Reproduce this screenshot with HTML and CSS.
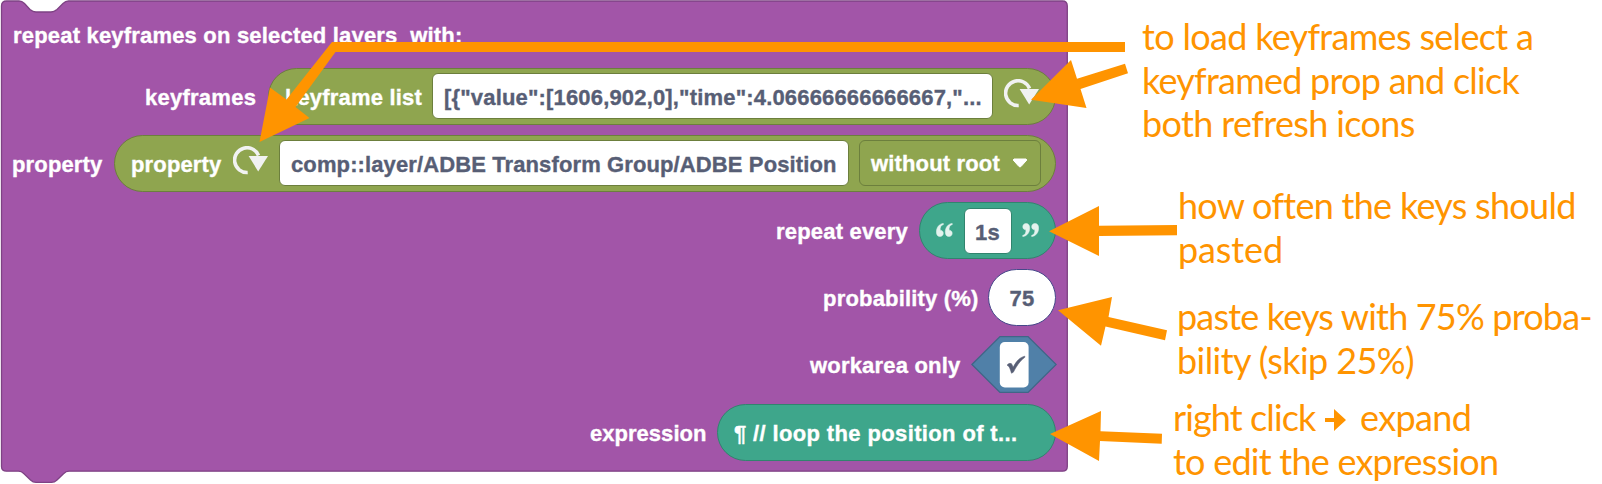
FILE: index.html
```html
<!DOCTYPE html>
<html lang="en">
<head>
<meta charset="utf-8">
<title>Repeat keyframes block</title>
<link rel="stylesheet" href="styles.css">
</head>
<body>
<svg class="defs" width="0" height="0">
  <symbol id="refresh" viewBox="0 0 36 30">
    <path d="M14.7 26.5 A12.4 12.4 0 1 1 25.5 9.5" fill="none" stroke="#f1f2f2" stroke-width="3.6"/>
    <path d="M15.6 10 H35 L25.2 25.4 Z" fill="#f1f2f2"/>
  </symbol>
</svg>
<main class="stage">
  <section class="block">
    <svg class="block-shape" width="1068" height="484" viewBox="0 0 1068 484">
      <path d="M1.5 6 Q1.5 1 6.500 1 H19 Q22 1 24.500 3.500 L30 9.500 Q33 12 36 12 H51 Q54 12 57 9.500 L63 3.500 Q65.500 1 68.500 1 H1062.500 Q1067.300 1 1067.300 6 V466.500 Q1067.300 471.200 1062.500 471.200 H69 Q66 471.200 63.500 473.700 L57 480 Q54.500 482.400 51.500 482.400 H36 Q33 482.400 30.500 480 L24 473.700 Q21.500 471.200 18.500 471.200 H6.500 Q1.500 471.200 1.500 466.500 Z"/>
    </svg>
    <h1 class="label title">repeat keyframes on selected layers&nbsp; with:</h1>
    <div class="rows">
      <div class="row">
        <span class="label w-keyframes">keyframes</span>
        <div class="pill green list-pill">
          <span class="label w-list">keyframe list</span>
          <span class="field list-field">[{"value":[1606,902,0],"time":4.06666666666667,"...</span>
          <svg class="refresh"><use href="#refresh"/></svg>
        </div>
      </div>
      <div class="row">
        <span class="label w-property">property</span>
        <div class="pill green property-pill">
          <span class="label w-property">property</span>
          <svg class="refresh"><use href="#refresh"/></svg>
          <span class="field path-field">comp::layer/ADBE Transform Group/ADBE Position</span>
          <span class="dropdown">without root
            <svg width="16" height="10" viewBox="0 0 16 10"><path d="M2 1 H14 L14.800 2 L9 8.500 Q8 9.300 7 8.500 L1.200 2 Z" fill="#fff" stroke="#fff" stroke-linejoin="round"/></svg>
          </span>
        </div>
      </div>
      <div class="row">
        <span class="label w-repeat">repeat every</span>
        <div class="pill teal quote-pill">
          <svg class="quote" width="17" height="14" viewBox="0 0 17 14"><path id="q" d="M7.300 .4 C3 1 .4 4.500 .4 9 C.4 12 1.800 13.500 4 13.500 C6 13.500 7.300 12.200 7.300 10.300 C7.300 8.500 6.200 7.300 4.200 7.200 C3.900 4.300 5 2.200 7.500 1.400 Z M16.200 .4 C11.900 1 9.300 4.500 9.300 9 C9.300 12 10.700 13.500 12.900 13.500 C14.900 13.500 16.200 12.200 16.200 10.300 C16.200 8.500 15.100 7.300 13.100 7.200 C12.800 4.300 13.900 2.200 16.400 1.400 Z" fill="#e4f3ee" stroke="#e4f3ee" stroke-width=".5"/></svg>
          <span class="field seconds">1s</span>
          <svg class="quote" width="17" height="14" viewBox="0 0 17 14"><use href="#q" transform="rotate(180 8.500 7)"/></svg>
        </div>
      </div>
      <div class="row">
        <span class="label w-prob">probability (%)</span>
        <div class="number">75</div>
      </div>
      <div class="row">
        <span class="label w-work">workarea only</span>
        <svg class="hex" width="86" height="57" viewBox="0 0 86 57">
          <path d="M.9 28.500 L29 .6 H57 L85.200 28.500 L57 56.400 H29 Z" fill="#5080a8" stroke="#406687" stroke-width="1.300"/>
          <rect x="28.800" y="6" width="28.800" height="45.500" rx="5" fill="#fff"/>
          <path d="M36 29.200 Q38 26.500 40.500 27.700 L42.200 31.200 C45.500 25 48.500 21.500 53.800 20.200 V21.300 C49 24.500 45 31 42.300 36.200 L40.500 37.200 C39.300 33.500 38.500 29.800 36 29.200 Z" fill="#575e75" stroke="#575e75" stroke-width=".6"/>
        </svg>
      </div>
      <div class="row">
        <span class="label w-expr">expression</span>
        <div class="pill teal text-pill"><span class="label">¶ // loop the position of t...</span></div>
      </div>
    </div>
  </section>
  <aside class="notes">
    <p class="note n1"><span class="l1">to load keyframes select a</span><span class="l2">keyframed prop and click</span><span class="l3">both refresh icons</span></p>
    <p class="note n2"><span class="l4">how often the keys should</span><span class="l5">pasted</span></p>
    <p class="note n3"><span class="l6">paste keys with 75% proba-</span><span class="l7">bility (skip 25%)</span></p>
    <p class="note n4"><span class="l8">right click <svg width="22" height="22" viewBox="0 0 22 22"><path d="M0 9 H9 V0 L21 11 L9 22 V13 H0 Z"/></svg> <span class="expand">expand</span></span><span class="l9">to edit the expression</span></p>
  </aside>
  <svg class="arrows" width="1602" height="484" viewBox="0 0 1602 484">
    <path d="M1125 42 H332 L286.500 99.500 L270 87.500 L259.500 142 L309.500 118 L295.500 107 L335.500 52 H1125 Z"/>
    <path d="M1125 63.700 L1077 78.800 L1071 60 L1031 99.700 L1086.500 108 L1080.500 89 L1128 73.300 Z"/>
    <path d="M1177 225 L1099 225.700 V206 L1049 231.300 L1099 256 V236 L1177 235.200 Z"/>
    <path d="M1167 330.300 L1108.500 317 L1112 297 L1058 310.300 L1101 345.700 L1105.500 326.500 L1165 340.300 Z"/>
    <path d="M1162 433.800 L1100.500 431.300 L1101 411 L1050 434 L1099 461 L1100 441 L1161.700 443.800 Z"/>
  </svg>
</main>
</body>
</html>
```
FILE: styles.css
```css
* { box-sizing: border-box; }
body { margin: 0; background: #fff; overflow: hidden; }
.defs { position: absolute; }
.stage { position: relative; display: flex; width: 1602px; height: 484px; }

.block {
  position: relative;
  width: 1068px;
  height: 484px;
  flex: none;
  padding: 22px 12px 0;
  font: bold 22px/26px "Liberation Sans", Arial, sans-serif;
  letter-spacing: 0.19px;
  -webkit-text-stroke: 0.350px currentColor;
  color: #fff;
}
.block-shape { position: absolute; left: 0; top: 0; z-index: -1; }
.block-shape path { fill: #a255a8; stroke: #7e4284; stroke-width: 1.3; }
.title { margin: 0; font: inherit; height: 45.700px; padding: 1px 0 0 1px; }
.label { white-space: nowrap; }
.rows { display: flex; flex-direction: column; gap: 10.200px; }
.row { display: flex; justify-content: flex-end; align-items: center; gap: 11px; height: 57px; }
.row .label { padding-top: 3px; }

.pill { display: flex; align-items: center; height: 57px; border: 1.400px solid; border-radius: 28.500px; }
.green { background: #8fa54f; border-color: #6c7f3d; }
.teal { background: #3ea68b; border-color: #31846e; }
.list-pill { width: 788px; padding-left: 16px; }
.property-pill { width: 942px; padding-left: 16px; }
.quote-pill { width: 137px; padding: 0 16px; justify-content: space-between; }
.text-pill { width: 339px; padding-left: 16px; letter-spacing: 0.365px; }

.w-keyframes { width: 112px; letter-spacing: 0.250px; }
.w-list { width: 147px; }
.w-property { width: 91px; letter-spacing: 0.150px; }
.w-repeat { width: 132px; }
.w-prob { width: 154px; }
.w-work { width: 151px; }
.w-expr { width: 116px; letter-spacing: 0.030px; }

.field {
  height: 46px;
  border: 1px solid #6c7f3d;
  border-radius: 6px;
  background: #fff;
  color: #575e75;
  line-height: 47px;
  white-space: nowrap;
}
.list-field { width: 561px; margin-right: 11px; padding-left: 11px; letter-spacing: 0.170px; }
.path-field { width: 570px; margin: 0 10px; padding-left: 11px; letter-spacing: 0.114px; }
.seconds { width: 48px; text-align: center; border-color: #31846e; }
.refresh { width: 36px; height: 30px; margin-top: -5px; flex: none; }
.property-pill .w-property + .refresh { margin-left: 11px; }
.dropdown {
  display: flex;
  align-items: center;
  gap: 12px;
  width: 182px;
  height: 46px;
  padding: 2px 0 0 11px;
  border: 1.400px solid #6c7f3d;
  border-radius: 6px;
  white-space: nowrap;
  letter-spacing: 0.150px;
}
.dropdown svg { margin-top: -3px; }
.quote { margin-top: -1px; }
.number {
  width: 68px;
  height: 57px;
  border: 1.300px solid #45488a;
  border-radius: 28.500px;
  background: #fff;
  color: #575e75;
  text-align: center;
  line-height: 57px;
}
.hex { margin-right: -1px; margin-left: -1px; flex: none; }

.notes { flex: 1; padding-top: 15px; font: 36px/43.700px Lato, sans-serif; color: #ff9400; }
.note { margin: 0; white-space: nowrap; }
.note > span { display: block; }
.note svg { fill: #ff9400; margin: 0 5px 0 1px; }
.n1 { height: 169px; padding-left: 74px; }
.n2 { height: 111px; padding-left: 110px; }
.n3 { height: 101px; padding-left: 109px; }
.n4 { padding-left: 105px; }
.l1 { letter-spacing: -0.686px; }
.l2 { letter-spacing: -0.760px; }
.l3 { letter-spacing: -0.640px; }
.l4 { letter-spacing: -0.720px; }
.l5 { letter-spacing: -0.100px; }
.l6 { letter-spacing: -0.820px; }
.l7 { letter-spacing: -0.568px; }
.l8 { letter-spacing: -0.894px; }
.l9 { letter-spacing: -0.765px; }
.expand { letter-spacing: -0.650px; }

.arrows { position: absolute; left: 0; top: 0; fill: #ff9400; pointer-events: none; }
```
